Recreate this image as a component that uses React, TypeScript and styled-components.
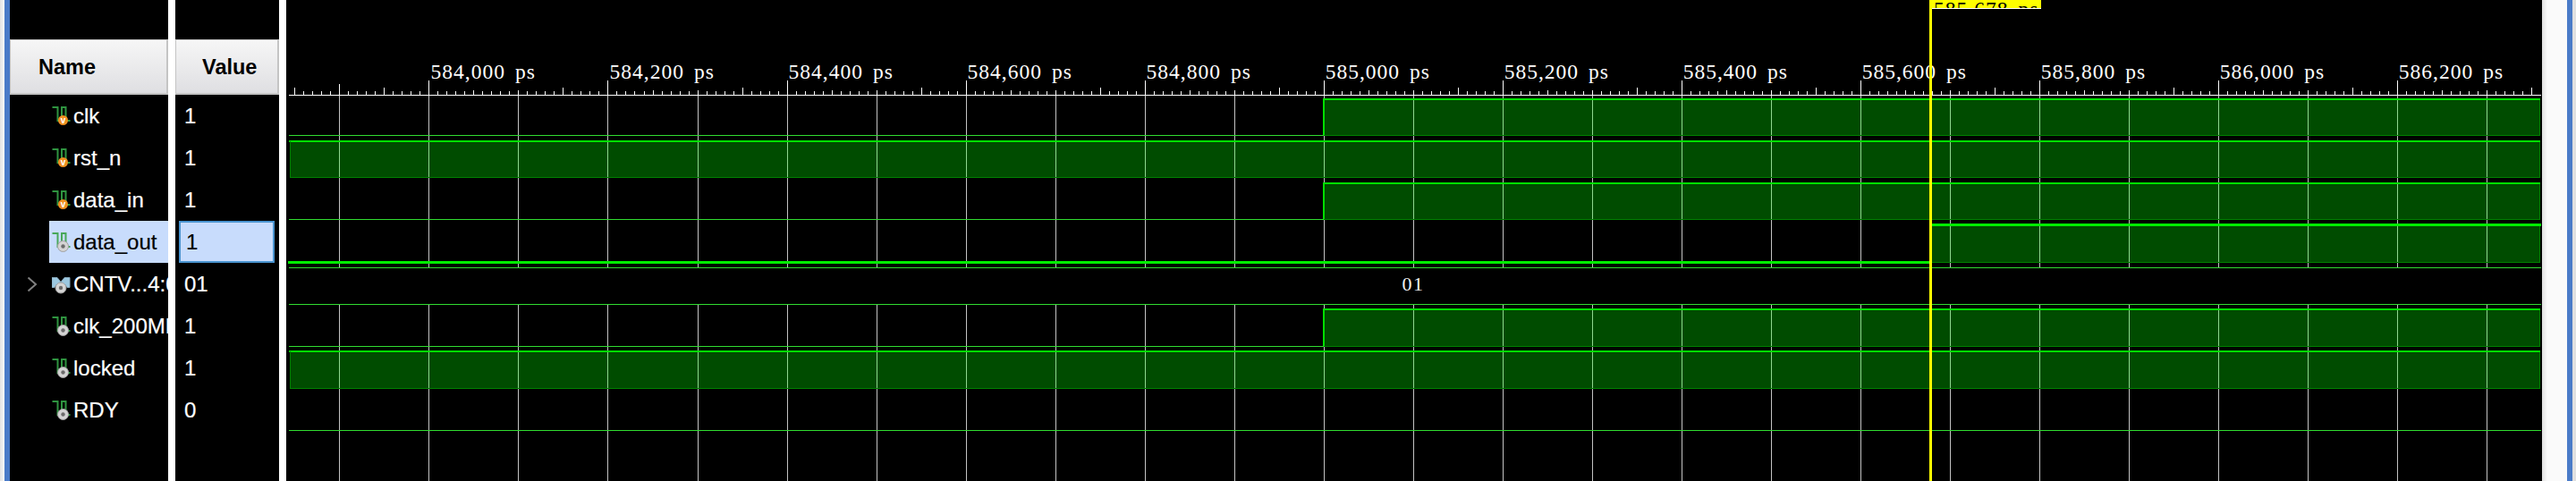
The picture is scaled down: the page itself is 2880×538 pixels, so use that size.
import React from "react";
import styled, { createGlobalStyle } from "styled-components";

type Signal = {
  name: string;
  value: string;
  icon: "input" | "wire" | "bus";
  selected?: boolean;
  expandable?: boolean;
};

const signals: Signal[] = [
  { name: "clk", value: "1", icon: "input" },
  { name: "rst_n", value: "1", icon: "input" },
  { name: "data_in", value: "1", icon: "input" },
  { name: "data_out", value: "1", icon: "wire", selected: true },
  { name: "CNTV...4:0]", value: "01", icon: "bus", expandable: true },
  { name: "clk_200MHz", value: "1", icon: "wire" },
  { name: "locked", value: "1", icon: "wire" },
  { name: "RDY", value: "0", icon: "wire" },
];

const WAVE_LEFT = 320;
const WAVE_WIDTH = 2522;
const X0 = 3; // first drawn pixel inside the wave pane
const X1 = 2520;
const CURSOR = 2158 - WAVE_LEFT;

const gridX: number[] = [];
for (let i = 0; i < 25; i++) gridX.push(Math.round(379.4 + i * 100.03) - WAVE_LEFT + 0.5);

const labels = [
  "584,000", "584,200", "584,400", "584,600", "584,800", "585,000",
  "585,200", "585,400", "585,600", "585,800", "586,000", "586,200",
];

const tickTop = (n: number) => {
  // n counts 10px steps from the first grid line
  if (n === 0) return 94;
  if (n === -5) return 98;
  const m = ((n - 10) % 20 + 20) % 20;
  if (m === 0) return 90;
  if (n === 5) return 98;
  if (m === 15) return 98;
  if (m === 5 || m === 10) return 101;
  return 102;
};

type Bar = { top: number; bottom: number; from: number; to: number };
const trans = 1480 - WAVE_LEFT;

const bars: Bar[] = [
  { top: 111, bottom: 151, from: trans, to: X1 },
  { top: 158, bottom: 198, from: X0 + 1, to: X1 },
  { top: 205, bottom: 245, from: trans, to: X1 },
  { top: 252, bottom: 293, from: CURSOR, to: X1 },
  { top: 346, bottom: 387, from: trans, to: X1 },
  { top: 393, bottom: 434, from: X0 + 1, to: X1 },
];

const lows = [
  { y: 151, to: trans },
  { y: 245, to: trans },
  { y: 387, to: trans },
  { y: 481, to: X1 + 1 },
];

const GrayDot = ({ cx, cy }: { cx: number; cy: number }) => (
  <>
    <circle cx={cx} cy={cy} r="6" fill="#d4d4d4" stroke="#a0a0a0" />
    <circle cx={cx} cy={cy} r="2.2" fill="#6c6c6c" />
  </>
);

const SignalIcon = ({ kind, selected }: { kind: Signal["icon"]; selected?: boolean }) => {
  if (kind === "bus") {
    return (
      <IconSvg viewBox="0 0 22 24">
        <path d="M0 4.5h6l4 5 4-5h6v11h-3l-2-3h-10l-2 3h-3z" fill="#9cc8e0" stroke="#86a8bc" />
        <GrayDot cx={10} cy={16} />
      </IconSvg>
    );
  }
  return (
    <IconSvg viewBox="0 0 22 24">
      <path
        d="M0.5 2h6v15h4.5v-15h4.5v15h5"
        fill="none"
        stroke={selected ? "#48a858" : "#2f9440"}
        strokeWidth="2"
      />
      {kind === "input" ? (
        <>
          <circle cx="12.5" cy="16.5" r="5.5" fill="#f09020" />
          <IconLetter x="12.5" y="20">
            v
          </IconLetter>
        </>
      ) : (
        <GrayDot cx={12.5} cy={16.5} />
      )}
    </IconSvg>
  );
};

const Waves = () => {
  const ticks: React.ReactElement[] = [];
  for (let n = -5; n < 247; n++) {
    const x = Math.round(379.4 + n * 10.003) - WAVE_LEFT + 0.5;
    if (x < X0 || x > X1) continue;
    ticks.push(<line key={n} x1={x} x2={x} y1={tickTop(n)} y2={106} stroke="#fff" />);
  }

  return (
    <WaveSvg width={WAVE_WIDTH} height={538} viewBox={`0 0 ${WAVE_WIDTH} 538`}>
      {gridX.map((x) => (
        <React.Fragment key={x}>
          <line x1={x} x2={x} y1={106} y2={299} stroke="#c4c4c4" />
          <line x1={x} x2={x} y1={340} y2={538} stroke="#c4c4c4" />
        </React.Fragment>
      ))}

      {bars.map((b, i) => (
        <g key={i}>
          <rect x={b.from} y={b.top} width={b.to - b.from} height={b.bottom - b.top} fill="#004c00" />
          {gridX
            .filter((x) => x > b.from && x < b.to)
            .map((x) => (
              <line key={x} x1={x} x2={x} y1={b.top} y2={b.bottom} stroke="#8fd88f" />
            ))}
          <line x1={b.from} x2={b.to} y1={b.bottom + 0.5} y2={b.bottom + 0.5} stroke="#008000" />
          <line x1={b.to - 0.5} x2={b.to - 0.5} y1={b.top} y2={b.bottom} stroke="#008000" />
          <rect x={b.from - 1} y={b.top - 1} width={X1 + 1 - b.from} height={2} fill="#00e000" />
          {b.from === trans && <rect x={b.from - 1} y={b.top - 1} width={2} height={b.bottom - b.top + 1} fill="#00e000" />}
          {b.from === X0 + 1 && <line x1={b.from + 0.5} x2={b.from + 0.5} y1={b.top} y2={b.bottom} stroke="#008000" />}
        </g>
      ))}

      {lows.map((l) => (
        <line key={l.y} x1={X0} x2={l.to} y1={l.y + 0.5} y2={l.y + 0.5} stroke="#30dc30" />
      ))}

      {/* data_out is selected so its trace is drawn thick */}
      <rect x={X0 - 1} y={292} width={CURSOR - X0 + 1} height={3} fill="#00ee00" />
      <rect x={CURSOR} y={250} width={X1 + 1 - CURSOR} height={3} fill="#00ee00" />

      <line x1={X0} x2={X1 + 1} y1={299.5} y2={299.5} stroke="#30dc30" />
      <line x1={X0} x2={X1 + 1} y1={340.5} y2={340.5} stroke="#30dc30" />
      <line x1={X0} x2={X1 + 1} y1={106.5} y2={106.5} stroke="#fff" />
      {ticks}

      {labels.map((t, i) => (
        <TickLabel key={t} x={481.5 + i * 200.03 - WAVE_LEFT} y={88}>
          {t}
          <tspan dx="11">ps</tspan>
        </TickLabel>
      ))}

      <BusValue x={1580 - WAVE_LEFT} y={325}>
        01
      </BusValue>

      <rect x={CURSOR - 1} y={0} width={3} height={538} fill="#ffff00" />
      <rect x={CURSOR - 1} y={0} width={125} height={9} fill="#ffff00" />
      <rect x={CURSOR + 2} y={9} width={122} height={1} fill="#fff" />
      <svg x={CURSOR + 2} y={0} width={122} height={9}>
        <CursorLabel x={2} y={18}>
          585,678
          <tspan dx="11">ps</tspan>
        </CursorLabel>
      </svg>
    </WaveSvg>
  );
};

const App = () => {
  return (
    <Page>
      <GlobalStyle />
      <LeftEdge />
      <NamePane>
        <TopGap />
        <HeaderCell>Name</HeaderCell>
        {signals.map((s) => (
          <NameRow key={s.name}>
            <Expander>
              {s.expandable && (
                <svg width="12" height="18" viewBox="0 0 12 18">
                  <path d="M1.5 1.5l8.5 7.5-8.5 7.5" fill="none" stroke="#808080" strokeWidth="2" />
                </svg>
              )}
            </Expander>
            <NameCell $selected={s.selected}>
              <SignalIcon kind={s.icon} selected={s.selected} />
              <NameText>{s.name}</NameText>
            </NameCell>
          </NameRow>
        ))}
      </NamePane>
      <Divider />
      <ValuePane>
        <TopGap />
        <ValueHeader>Value</ValueHeader>
        {signals.map((s) => (
          <ValueRow key={s.name}>
            <ValueCell $selected={s.selected}>{s.value}</ValueCell>
          </ValueRow>
        ))}
      </ValuePane>
      <Divider />
      <Waves />
      <RightEdge />
    </Page>
  );
};

export default App;

const GlobalStyle = createGlobalStyle`
  html, body {
    margin: 0;
    padding: 0;
    background: #fff;
  }
`;

const Page = styled.div`
  display: flex;
  width: 2880px;
  height: 538px;
  overflow: hidden;
  background: #000;
  font-family: "Liberation Sans", Arial, sans-serif;
`;

const LeftEdge = styled.div`
  flex: none;
  width: 11px;
  background: linear-gradient(90deg, #e2e2e2 0, #fafafa 5px, #4a7bc8 5px, #4a7bc8 100%);
`;

const NamePane = styled.div`
  flex: none;
  width: 177px;
  display: flex;
  flex-direction: column;
  background: #000;
`;

const ValuePane = styled.div`
  flex: none;
  width: 116px;
  display: flex;
  flex-direction: column;
  background: #000;
`;

const Divider = styled.div`
  flex: none;
  width: 8px;
  background: #fff;
`;

const TopGap = styled.div`
  flex: none;
  height: 44px;
`;

const HeaderCell = styled.div`
  flex: none;
  box-sizing: border-box;
  height: 62px;
  padding: 2px 0 0 31px;
  display: flex;
  align-items: center;
  background: linear-gradient(180deg, #f6f6f6, #dfdfe2);
  border: 1px solid #c4c4c4;
  border-right-width: 2px;
  border-bottom-width: 2px;
  font-size: 23.5px;
  font-weight: 700;
  color: #000;
`;

const ValueHeader = styled(HeaderCell)`
  padding-left: 29px;
`;

const NameRow = styled.div`
  flex: none;
  height: 47px;
  display: flex;
  align-items: stretch;
`;

const Expander = styled.div`
  flex: none;
  width: 44px;
  padding-left: 19px;
  box-sizing: border-box;
  display: flex;
  align-items: center;
`;

const NameCell = styled.div<{ $selected?: boolean }>`
  flex: 1;
  min-width: 0;
  display: flex;
  align-items: center;
  gap: 2px;
  padding-left: 3px;
  overflow: hidden;
  white-space: nowrap;
  background: ${(p) => (p.$selected ? "#c8dcfc" : "transparent")};
  color: ${(p) => (p.$selected ? "#000" : "#fff")};
  font-size: 24px;
  -webkit-text-stroke: 0.2px currentColor;
`;

const IconSvg = styled.svg`
  flex: none;
  width: 22px;
  height: 24px;
`;

const IconLetter = styled.text`
  font-family: "Liberation Sans", Arial, sans-serif;
  font-size: 10px;
  font-weight: 700;
  fill: #fff;
  text-anchor: middle;
  -webkit-text-stroke: 0;
`;

const NameText = styled.span`
  flex: none;
`;

const ValueRow = styled.div`
  flex: none;
  height: 47px;
  display: flex;
  align-items: stretch;
`;

const ValueCell = styled.div<{ $selected?: boolean }>`
  flex: 1;
  box-sizing: border-box;
  display: flex;
  align-items: center;
  margin: 0 ${(p) => (p.$selected ? "5px" : "0")} 0 ${(p) => (p.$selected ? "4px" : "0")};
  padding-left: ${(p) => (p.$selected ? "6px" : "10px")};
  border: ${(p) => (p.$selected ? "2px solid #4a94d0" : "none")};
  background: ${(p) => (p.$selected ? "#c8dcfc" : "transparent")};
  color: ${(p) => (p.$selected ? "#000" : "#fff")};
  font-size: 24px;
  -webkit-text-stroke: 0.2px currentColor;
`;

const WaveSvg = styled.svg`
  flex: none;
  display: block;
  background: #000;
`;

const TickLabel = styled.text`
  font-family: "Liberation Serif", "Times New Roman", serif;
  font-size: 23.5px;
  letter-spacing: 1px;
  fill: #fff;
`;

const BusValue = styled.text`
  font-family: "Liberation Serif", "Times New Roman", serif;
  font-size: 22px;
  letter-spacing: 1.5px;
  fill: #f0f0f0;
  text-anchor: middle;
`;

const CursorLabel = styled.text`
  font-family: "Liberation Serif", "Times New Roman", serif;
  font-size: 23.5px;
  letter-spacing: 1px;
  fill: #000;
`;

const RightEdge = styled.div`
  flex: none;
  width: 38px;
  background: linear-gradient(90deg, #e0e0e0 0, #fafafa 6px, #fafafa 28px, #4a7bc8 28px, #4a7bc8 34px, #e0e0e0 34px);
`;
